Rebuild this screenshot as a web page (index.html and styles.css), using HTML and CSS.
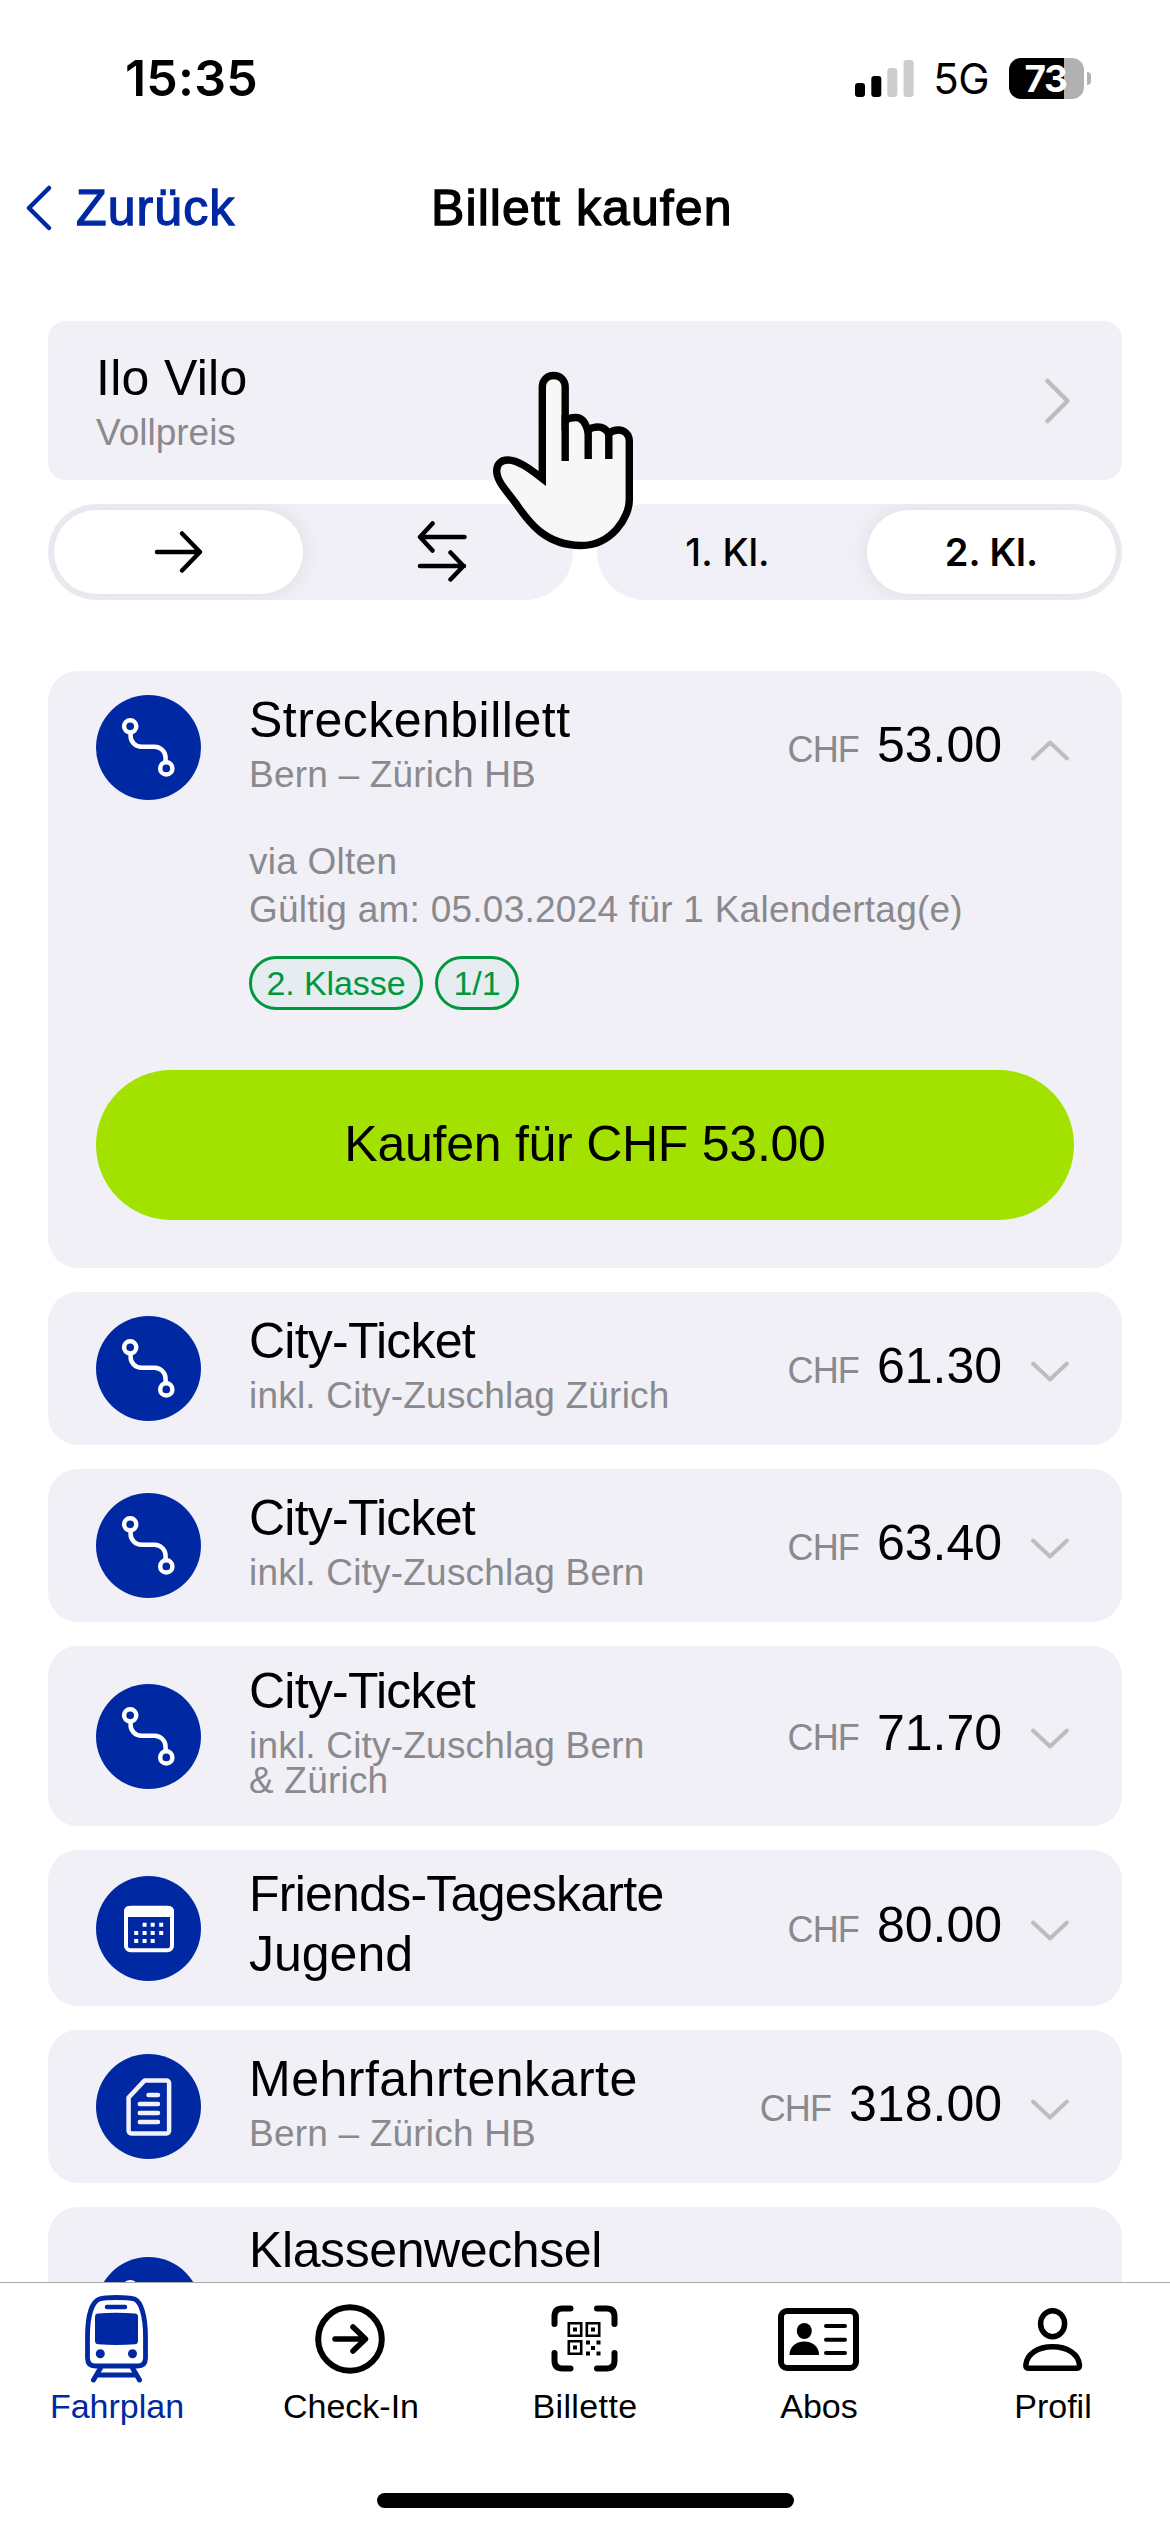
FILE: index.html
```html
<!DOCTYPE html>
<html lang="de">
<head>
<meta charset="utf-8">
<title>Billett kaufen</title>
<link rel="stylesheet" href="styles.css">
</head>
<body>
<svg class="defs" width="0" height="0">
  <symbol id="route" viewBox="0 0 105 105">
    <g fill="none" stroke="#fff" stroke-width="4.5">
      <circle cx="34.2" cy="31.3" r="6.1"/>
      <circle cx="70.3" cy="73.4" r="6.1"/>
      <path d="M34.6 38v3a11 10.8 0 0 0 11 10.8h13a11 11 0 0 1 11 11V67"/>
    </g>
  </symbol>
  <symbol id="calendar" viewBox="0 0 105 105">
    <rect x="30" y="31.8" width="46" height="42.4" rx="4.5" fill="none" stroke="#fff" stroke-width="4"/>
    <path d="M28 41v-6a5 5 0 0 1 5-5h40a5 5 0 0 1 5 5v6z" fill="#fff"/>
    <path d="M46.6 48.7h4m4.1 0h4m4.5 0h4M38.2 57h4m4.4 0h4m4.1 0h4m4.5 0h4M38.2 65h4m4.4 0h4m4.1 0h4" stroke="#fff" stroke-width="4"/>
  </symbol>
  <symbol id="multi" viewBox="0 0 105 105">
    <path d="M48.5 26.6h22a2.6 2.6 0 0 1 2.6 2.6v47.6a2.6 2.6 0 0 1-2.6 2.6H35.2a2.6 2.6 0 0 1-2.6-2.6V43.5z" fill="none" stroke="#f1f1f8" stroke-width="4.5" stroke-linejoin="round"/>
    <path d="M52.5 41H62M43.8 50H62M43.8 59H62M43.8 68H62" stroke="#f1f1f8" stroke-width="4.5" stroke-linecap="round"/>
  </symbol>
  <symbol id="down" viewBox="0 0 40 24"><path d="M3 3.5l17 16 17-16" fill="none" stroke="#bcbcc1" stroke-width="4" stroke-linecap="round" stroke-linejoin="round"/></symbol>
  <symbol id="up" viewBox="0 0 40 24"><path d="M3 19.5l17-16 17 16" fill="none" stroke="#bcbcc1" stroke-width="4" stroke-linecap="round" stroke-linejoin="round"/></symbol>
</svg>

<header class="status">
  <span class="time">15:35</span>
  <svg class="signal" width="60" height="40" viewBox="0 0 60 40">
    <rect x="0" y="25" width="10" height="14" rx="3"/>
    <rect x="16.3" y="18" width="10" height="21" rx="3"/>
    <rect x="32.3" y="10" width="10" height="29" rx="3" fill="#ccc"/>
    <rect x="48.6" y="2" width="10" height="37" rx="3" fill="#ccc"/>
  </svg>
  <span class="net">5G</span>
  <span class="battery"><span class="level">73</span></span>
  <span class="nub"></span>
</header>

<nav class="nav">
  <a class="back"><svg width="27" height="46" viewBox="0 0 27 46"><path d="M24 3L4 23l20 20" fill="none" stroke="#0028a3" stroke-width="4.5" stroke-linecap="round" stroke-linejoin="round"/></svg><span>Zurück</span></a>
  <h1>Billett kaufen</h1>
</nav>

<main class="content">
  <section class="traveller">
    <div><div class="name">Ilo Vilo</div><div class="sub">Vollpreis</div></div>
    <svg width="28" height="46" viewBox="0 0 28 46"><path d="M3.5 3l20 20-20 20" fill="none" stroke="#bcbcc1" stroke-width="4.5" stroke-linecap="round" stroke-linejoin="round"/></svg>
  </section>

  <div class="switches">
    <div class="segment">
      <span class="option on"><svg width="50" height="44" viewBox="0 0 50 44"><path d="M3 22h43M28 3.500l18 18.500-18 18.500"/></svg></span>
      <span class="option"><svg width="52" height="64" viewBox="0 0 52 64"><path d="M47.500 17H4M15.500 3.500L3 17l12.500 13.500M3 46h44M33.500 32.500L46.500 46l-13 13.500"/></svg></span>
    </div>
    <div class="segment">
      <span class="option">1. Kl.</span>
      <span class="option on">2. Kl.</span>
    </div>
  </div>

  <div class="tickets">
    <article class="card open">
      <div class="row">
        <span class="badge"><svg><use href="#route"/></svg></span>
        <div class="text"><h2 class="wide">Streckenbillett</h2><p>Bern – Zürich HB</p></div>
        <div class="price"><small>CHF</small><b>53.00</b><svg class="chev"><use href="#up"/></svg></div>
      </div>
      <div class="details">
        <p>via Olten</p>
        <p>Gültig am: 05.03.2024 für 1 Kalendertag(e)</p>
        <div class="tags"><span class="tag">2. Klasse</span><span class="tag short">1/1</span></div>
      </div>
      <button class="buy">Kaufen für CHF 53.00</button>
    </article>

    <article class="card row">
      <span class="badge"><svg><use href="#route"/></svg></span>
      <div class="text"><h2 class="tighter">City-Ticket</h2><p>inkl. City-Zuschlag Zürich</p></div>
      <div class="price"><small>CHF</small><b>61.30</b><svg class="chev"><use href="#down"/></svg></div>
    </article>
    <article class="card row">
      <span class="badge"><svg><use href="#route"/></svg></span>
      <div class="text"><h2 class="tighter">City-Ticket</h2><p>inkl. City-Zuschlag Bern</p></div>
      <div class="price"><small>CHF</small><b>63.40</b><svg class="chev"><use href="#down"/></svg></div>
    </article>
    <article class="card row three">
      <span class="badge"><svg><use href="#route"/></svg></span>
      <div class="text"><h2 class="tighter">City-Ticket</h2><p>inkl. City-Zuschlag Bern<br>&amp; Zürich</p></div>
      <div class="price"><small>CHF</small><b>71.70</b><svg class="chev"><use href="#down"/></svg></div>
    </article>
    <article class="card row titles">
      <span class="badge"><svg><use href="#calendar"/></svg></span>
      <div class="text"><h2 class="tighter">Friends-Tageskarte</h2><h2>Jugend</h2></div>
      <div class="price"><small>CHF</small><b>80.00</b><svg class="chev"><use href="#down"/></svg></div>
    </article>
    <article class="card row">
      <span class="badge"><svg><use href="#multi"/></svg></span>
      <div class="text"><h2 class="wide">Mehrfahrtenkarte</h2><p>Bern – Zürich HB</p></div>
      <div class="price"><small>CHF</small><b>318.00</b><svg class="chev"><use href="#down"/></svg></div>
    </article>
    <article class="card row last">
      <span class="badge"><svg><use href="#route"/></svg></span>
      <div class="text"><h2 class="tight">Klassenwechsel</h2></div>
    </article>
  </div>
</main>

<footer class="tabbar">
  <div class="tabs">
    <a class="tab active">
      <svg width="100" height="97" viewBox="0 0 100 97">
        <path d="M49.500 8.500c-9 0-14 .5-17 1.500-8 3-12 18-12 38v21q0 8 8 8h42q8 0 8-8V48c0-20-4-35-11-38-4-1-9-1.500-18-1.500z" fill="none" stroke="currentColor" stroke-width="4.800"/>
        <path d="M40 18h18" stroke="currentColor" stroke-width="4.500" stroke-linecap="round"/>
        <path d="M31 24.500q18.500-1.400 37 0 3 .3 3 3.500v24q0 3-3 3.300-18.500 1.400-37 0-3-.3-3-3.300V28q0-3.200 3-3.500z" fill="currentColor"/>
        <circle cx="33.300" cy="64.700" r="4.500" fill="currentColor"/><circle cx="65.500" cy="64.700" r="4.500" fill="currentColor"/>
        <path d="M33.500 79l-7 12M65.500 79l7 12M31 86h37" fill="none" stroke="currentColor" stroke-width="5" stroke-linecap="round"/>
      </svg><span>Fahrplan</span></a>
    <a class="tab">
      <svg width="100" height="97" viewBox="0 0 100 97"><g fill="none" stroke="currentColor" stroke-width="6"><circle cx="49" cy="50" r="31.800"/><path d="M34 50h29.500M52 38l12.500 12L52 62" stroke-width="5.500" stroke-linecap="round" stroke-linejoin="round"/></g></svg><span>Check-In</span></a>
    <a class="tab">
      <svg width="100" height="97" viewBox="0 0 100 97">
        <path d="M35.500 19.500h-8q-8 0-8 8V35M62 19.500h9.500q8 0 8 8V35M19.500 64v7.500q0 8 8 8h8M79.500 64v7.500q0 8-8 8H62" fill="none" stroke="currentColor" stroke-width="6" stroke-linecap="round"/>
        <path d="M33.800 34.300h12.400v12.400H33.800zM51.800 34.300h12.400v12.400H51.800zM33.800 52.300h12.400v12.400H33.800z" fill="none" stroke="currentColor" stroke-width="2.600"/>
        <path d="M38 40.500h4m14 0h4M38 58.500h4M51 53.500h4m6.500 0h4M56 59h4M51 64.500h4m6.500 0h4" stroke="currentColor" stroke-width="4"/>
      </svg><span class="spaced">Billette</span></a>
    <a class="tab">
      <svg width="100" height="97" viewBox="0 0 100 97">
        <rect x="12" y="22" width="75" height="57" rx="6" fill="none" stroke="currentColor" stroke-width="6"/>
        <ellipse cx="35.300" cy="42" rx="7.500" ry="8"/><path d="M20.500 66c0-8 6-13.500 14.800-13.500S50 58 50 66z"/>
        <path d="M57 37h19M57 50.700h19M57 64h19" stroke="currentColor" stroke-width="4" stroke-linecap="round"/>
      </svg><span>Abos</span></a>
    <a class="tab">
      <svg width="100" height="97" viewBox="0 0 100 97"><g fill="none" stroke="currentColor" stroke-width="5.500"><ellipse cx="49.600" cy="34.700" rx="12" ry="13"/><path d="M26 79.300q-3.200 0-3.200-3.300c1-11 12-18.300 26.800-18.300S75.500 65 76.500 76q0 3.300-3.200 3.300z"/></g></svg><span>Profil</span></a>
  </div>
  <div class="home"></div>
</footer>

<svg class="hand" width="150" height="190" viewBox="488 366 150 190">
  <path d="M565.200 421V387C565.200 380 560 375.500 553.700 375.500S542.300 380 542.300 387V478.500C530 469 518 460 508 460 500 460 496.700 465 496.700 471 496.700 481 506 490 517 505 528 521 545 545.500 581 545.500 612 545.500 629.300 517 629.300 500V441C629.300 434 624 430 618.500 430 614 430 611 431.500 608.800 433.500 606 429 602.500 427 598 427 593 427 590 428.500 587.500 430 585 421 581 417.500 576 417.500 571 417.500 567 419 565.200 421z" fill="#f7f7f7" stroke="#000" stroke-width="7.400"/>
  <path d="M565.200 415V461M587 426Q588.200 429 588.200 433V459M607.500 430Q608.800 433 608.800 437V459" fill="none" stroke="#000" stroke-width="7.400"/>
</svg>
</body>
</html>
```
FILE: styles.css
```css
* { box-sizing: border-box; }
body {
  margin: 0;
  width: 1170px;
  height: 2532px;
  overflow: hidden;
  position: relative;
  display: flex;
  flex-direction: column;
  background: #fff;
  color: #000;
  font-family: "Liberation Sans", Arial, sans-serif;
}
h1, h2, p { margin: 0; font-weight: 400; }
svg { display: block; flex: none; }
.defs { position: absolute; }

.status {
  height: 156px;
  padding: 0 79px 0 125px;
  display: flex;
  align-items: center;
  font-family: Inter, sans-serif;
}
.time { font-size: 50px; font-weight: 600; letter-spacing: 0.2px; margin-right: auto; }
.signal { margin-right: 18px; }
.net { font-size: 42px; font-weight: 400; letter-spacing: -0.5px; margin-right: 20px; }
.battery {
  width: 75px;
  height: 41px;
  border-radius: 12px;
  background: linear-gradient(90deg, #000 55px, #b1b1b1 55px);
  display: flex;
  align-items: center;
  justify-content: center;
}
.level { color: #fff; font-size: 37px; font-weight: 700; letter-spacing: -1.5px; line-height: 41px; margin-right: 2px; }
.nub { width: 4px; height: 13px; margin-left: 3px; background: #b1b1b1; border-radius: 0 5px 5px 0; }

.nav {
  height: 165px;
  padding: 22px 0 0 25px;
  display: grid;
  grid-template-columns: 406px 1fr;
  align-items: start;
}
.back { display: flex; align-items: center; gap: 24px; height: 60px; color: #0028a3; }
.back span, h1 { font-size: 50px; line-height: 60px; letter-spacing: 1.1px; -webkit-text-stroke: 1.3px currentColor; white-space: nowrap; }

.content { flex: 1; min-height: 0; overflow: hidden; padding: 0 48px; }
.traveller {
  height: 159px;
  border-radius: 18px;
  background: #f1f0f6;
  padding: 0 50px 0 48px;
  display: flex;
  align-items: center;
  justify-content: space-between;
}
.name { font-size: 50px; line-height: 60px; letter-spacing: 0.3px; }
.sub { font-size: 37px; line-height: 40px; color: #8a898e; margin-top: 5px; }

.switches { display: grid; grid-template-columns: 525px 525px; gap: 24px; margin: 24px 0 71px; }
.segment {
  height: 96px;
  border-radius: 48px;
  background: #f1f0f6;
  padding: 6px;
  display: flex;
  justify-content: space-between;
  overflow: hidden;
}
.option {
  width: 249px;
  height: 84px;
  border-radius: 42px;
  display: flex;
  align-items: center;
  justify-content: center;
  font: 500 38px/84px Inter, sans-serif;
}
.option.on { background: #fff; font-weight: 600; box-shadow: 0 0 24px 2px rgba(0, 0, 0, 0.07); }
.option svg { fill: none; stroke: #000; stroke-width: 4.5; stroke-linecap: round; stroke-linejoin: round; }

.tickets { display: flex; flex-direction: column; gap: 24px; }
.card { border-radius: 30px; background: #f1f0f6; padding: 0 48px; height: 153px; flex: none; }
.card.open { height: 597px; }
.card.three { height: 180px; }
.card.titles { height: 156px; }
.card.last { height: 205px; }
.row { display: flex; align-items: center; }
.open .row { height: 153px; }
.badge { width: 105px; height: 105px; border-radius: 50%; background: #0028a3; flex: none; margin-right: 48px; }
.badge svg { width: 105px; height: 105px; }
.text { flex: 1; padding-bottom: 13px; white-space: nowrap; }
.titles .text { padding-bottom: 9px; }
.last .text { align-self: flex-start; padding-top: 13px; }
h2 { font-size: 50px; line-height: 60px; }
.wide { letter-spacing: 0.5px; }
.tight { letter-spacing: -0.4px; }
.tighter { letter-spacing: -0.75px; }
.text p { font-size: 37px; line-height: 35.5px; color: #8a898e; margin-top: 7px; letter-spacing: 0.2px; }
.price { display: flex; align-items: baseline; }
.price small { font-size: 36px; color: #8a898e; letter-spacing: -0.9px; margin-right: 18px; }
.price b { font-size: 50px; line-height: 60px; font-weight: 400; margin-top: -6px; }
.chev { width: 40px; height: 24px; margin-left: 28px; margin-right: 4px; align-self: center; position: relative; top: 3px; }

.details { padding: 14px 0 0 153px; }
.details p { font-size: 37px; line-height: 48px; color: #8a898e; letter-spacing: 0.25px; white-space: nowrap; }
.tags { display: flex; gap: 12px; margin-top: 22px; }
.tag {
  height: 54px;
  width: 174px;
  border: 3px solid #00973f;
  border-radius: 27px;
  background: #e5edf0;
  color: #00973f;
  font-size: 34px;
  line-height: 49px;
  letter-spacing: -0.1px;
  text-align: center;
}
.tag.short { width: 84px; }
.buy {
  display: block;
  width: 978px;
  height: 150px;
  margin-top: 60px;
  border: 0;
  padding: 0 0 2px;
  border-radius: 75px;
  background: #a3e200;
  color: #000;
  font: 50px "Liberation Sans", Arial, sans-serif;
  letter-spacing: -0.25px;
}

.tabbar { height: 250px; border-top: 1px solid #a9a8ad; background: #fff; padding-top: 6px; }
.tabs { display: grid; grid-template-columns: repeat(5, 1fr); }
.tab { display: flex; flex-direction: column; align-items: center; font-size: 34px; line-height: 40px; }
.tab.active { color: #0028a3; }
.spaced { letter-spacing: 0.4px; }
.home { width: 417px; height: 15px; border-radius: 8px; background: #000; margin: 67px auto 0; }

.hand { position: absolute; left: 488px; top: 366px; }
```
